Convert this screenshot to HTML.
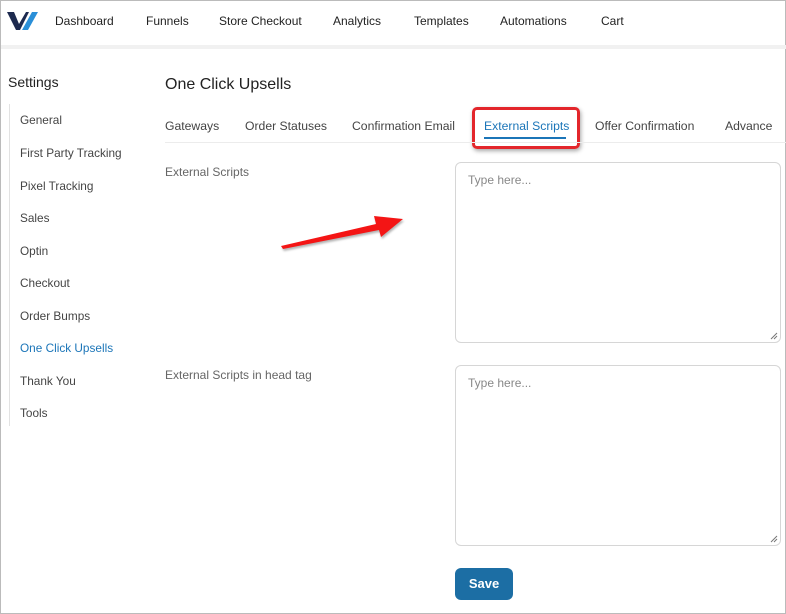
<!DOCTYPE html>
<html><head><style>
*{margin:0;padding:0;box-sizing:border-box}
body{width:786px;height:614px;background:#fff;font-family:"Liberation Sans",sans-serif;position:relative;overflow:hidden;border:1px solid #bbb;color:#333}
.t{position:absolute;white-space:nowrap}
.nav{font-size:12px;color:#222;top:13px}
.side{font-size:11.8px;color:#444;left:19px}
.tab{font-size:12.2px;color:#444;top:118px}
.ta{position:absolute;left:454px;width:326px;border:1px solid #d6d6d6;border-radius:6px}
.ph{position:absolute;left:12px;top:10px;font-size:12px;color:#888}
.rh{position:absolute;right:2px;bottom:2px}
</style></head><body>
<svg class="t" style="left:6px;top:9px" width="32" height="22" viewBox="0 0 32 22"><polygon points="0,2 7,2 12,14 19,2 22,2 13,20 9,20" fill="#1d2a4f"/><polygon points="25,2 31,2 21,20 15,20" fill="#2a8fd8"/></svg>
<div class="t nav" style="left:54px">Dashboard</div>
<div class="t nav" style="left:145px">Funnels</div>
<div class="t nav" style="left:218px">Store Checkout</div>
<div class="t nav" style="left:332px">Analytics</div>
<div class="t nav" style="left:413px">Templates</div>
<div class="t nav" style="left:499px">Automations</div>
<div class="t nav" style="left:600px">Cart</div>
<div class="t" style="left:0;top:44px;width:786px;height:4px;background:#f1f1f1"></div>
<div class="t" style="left:7px;top:73px;font-size:14px;color:#222">Settings</div>
<div class="t" style="left:8px;top:103px;width:1px;height:322px;background:#e2e2e2"></div>
<div class="t side" style="top:112px">General</div>
<div class="t side" style="top:145px">First Party Tracking</div>
<div class="t side" style="top:178px">Pixel Tracking</div>
<div class="t side" style="top:210px">Sales</div>
<div class="t side" style="top:243px">Optin</div>
<div class="t side" style="top:275px">Checkout</div>
<div class="t side" style="top:308px">Order Bumps</div>
<div class="t side" style="top:340px;color:#1b75b8">One Click Upsells</div>
<div class="t side" style="top:373px">Thank You</div>
<div class="t side" style="top:405px">Tools</div>
<div class="t" style="left:164px;top:75px;font-size:16px;color:#222">One Click Upsells</div>
<div class="t tab" style="left:164px">Gateways</div>
<div class="t tab" style="left:244px">Order Statuses</div>
<div class="t tab" style="left:351px">Confirmation Email</div>
<div class="t tab" style="left:483px;color:#1b75b8">External Scripts</div>
<div class="t" style="left:483px;top:136px;width:82px;height:2px;background:#1b75b8"></div>
<div class="t" style="left:471px;top:106px;width:108px;height:42px;border:3px solid #e3262b;border-radius:5px;box-shadow:1px 2px 4px rgba(0,0,0,.35)"></div>
<div class="t tab" style="left:594px">Offer Confirmation</div>
<div class="t tab" style="left:724px">Advance</div>
<div class="t" style="left:164px;top:141px;width:622px;height:1px;background:#ececec"></div>
<div class="t" style="left:164px;top:164px;font-size:12px;color:#666">External Scripts</div>
<div class="ta" style="top:161px;height:181px"><div class="ph">Type here...</div><svg class="rh" width="8" height="8"><path d="M1 7L7 1M4 7L7 4" stroke="#777"/></svg></div>
<div class="t" style="left:164px;top:367px;font-size:12px;color:#666">External Scripts in head tag</div>
<div class="ta" style="top:364px;height:181px"><div class="ph">Type here...</div><svg class="rh" width="8" height="8"><path d="M1 7L7 1M4 7L7 4" stroke="#777"/></svg></div>
<svg class="t" style="left:275px;top:208px" width="135" height="45"><polygon points="5,37 100,15 98,7 127,10 105,28 103,21 7,40" fill="#f41515" style="filter:drop-shadow(1px 2px 1px rgba(0,0,0,.3))"/></svg>
<div class="t" style="left:454px;top:567px;width:58px;height:32px;background:#1c6ea4;border-radius:6px;color:#fff;font-size:13px;font-weight:bold;text-align:center;line-height:32px">Save</div>
</body></html>
